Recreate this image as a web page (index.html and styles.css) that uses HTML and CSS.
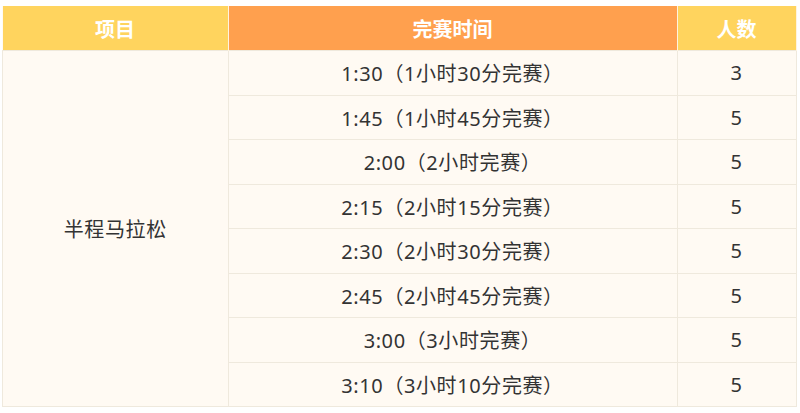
FILE: index.html
```html
<!DOCTYPE html>
<html lang="zh">
<head>
<meta charset="utf-8">
<link rel="stylesheet" href="styles.css">
</head>
<body>
<table class="tbl">
  <thead>
    <tr>
      <th class="h-yellow c1">项目</th>
      <th class="h-orange c2">完赛时间</th>
      <th class="h-yellow c3">人数</th>
    </tr>
  </thead>
  <tbody>
    <tr><td rowspan="8">半程马拉松</td><td>1:30（1小时30分完赛）</td><td>3</td></tr>
    <tr><td>1:45（1小时45分完赛）</td><td>5</td></tr>
    <tr><td>2:00（2小时完赛）</td><td>5</td></tr>
    <tr><td>2:15（2小时15分完赛）</td><td>5</td></tr>
    <tr><td>2:30（2小时30分完赛）</td><td>5</td></tr>
    <tr><td>2:45（2小时45分完赛）</td><td>5</td></tr>
    <tr><td>3:00（3小时完赛）</td><td>5</td></tr>
    <tr><td>3:10（3小时10分完赛）</td><td>5</td></tr>
  </tbody>
</table>
</body>
</html>
```
FILE: styles.css
```css
html, body {
  margin: 0;
  padding: 0;
  background: #ffffff;
}
body {
  padding: 6px 0 0 2px;
  font-family: "Noto Sans", "Noto Sans CJK SC", sans-serif;
  color: #333333;
}
.tbl {
  width: 791px;
  border-collapse: collapse;
  table-layout: fixed;
  background: #fffaf3;
}
.tbl th {
  height: 44px;
  padding: 0;
  font-family: "Noto Sans CJK SC", sans-serif;
  font-size: 20px;
  font-weight: 700;
  color: #ffffff;
  text-align: center;
  border-right: 1px solid #fff3df;
}
.h-yellow { background: #ffd45e; }
.h-orange { background: #ffa04e; }
.c1 { width: 225px; }
.c2 { width: 448px; }
.c3 { width: 118px; }
.tbl td {
  height: 44.5px;
  padding: 0;
  font-size: 20px;
  letter-spacing: 0.6px;
  text-align: center;
  border: 1px solid #efe9dd;
  box-sizing: border-box;
}
```
